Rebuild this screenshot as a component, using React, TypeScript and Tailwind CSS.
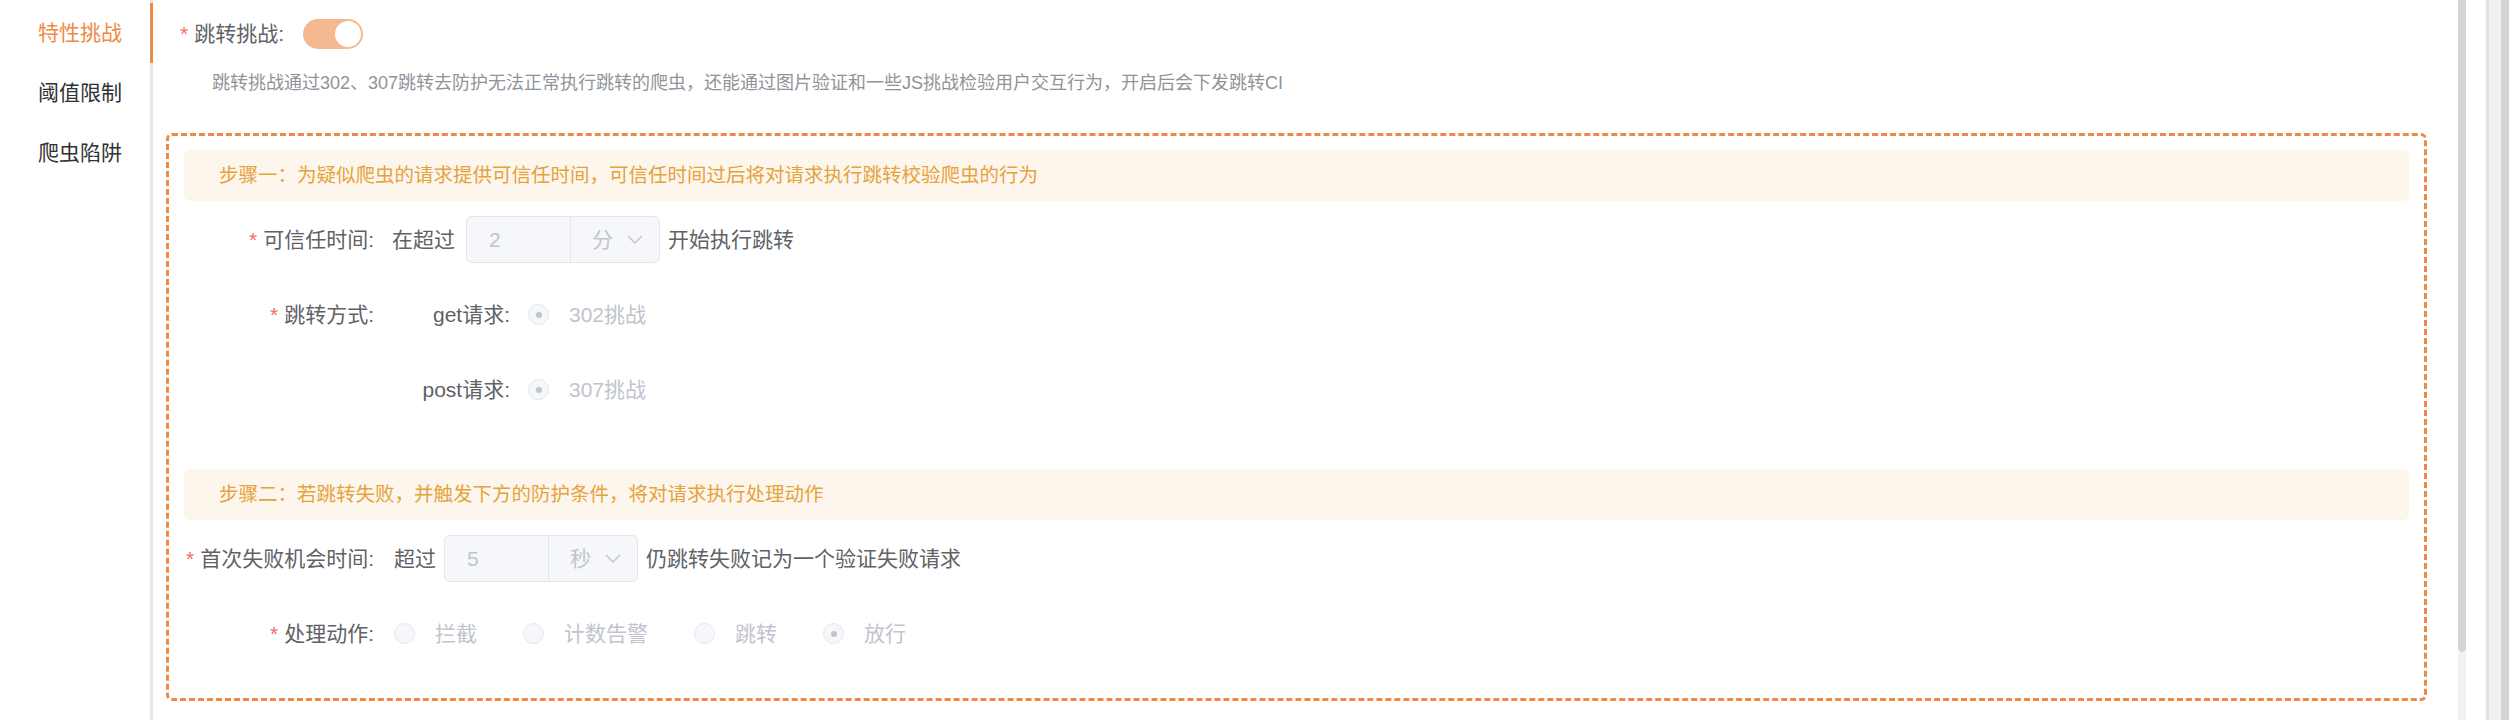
import React from "react";

const navItems = ["特性挑战", "阈值限制", "爬虫陷阱"];

function Req() {
  return <span className="mr-[6px] text-[#f56c6c]">*</span>;
}

function Radio({ checked, label }: { checked?: boolean; label: string }) {
  return (
    <span className="inline-flex items-center gap-[20px]">
      <span className="flex h-[21px] w-[21px] items-center justify-center rounded-full border-[1.5px] border-[#e4e7ed] bg-[#f5f7fa]">
        {checked && <span className="h-[6px] w-[6px] rounded-full bg-[#c0c4cc]" />}
      </span>
      <span className="text-[#c0c4cc]">{label}</span>
    </span>
  );
}

function UnitInput({ value, unit }: { value: string; unit: string }) {
  return (
    <div className="flex h-[47px] items-stretch rounded-[6px] border border-[#e2e5eb] bg-[#f5f7fa] text-[#c0c4cc]">
      <div className="flex w-[103px] items-center pl-[22px]">{value}</div>
      <div className="flex items-center border-l border-[#e2e5eb] pl-[21px] pr-[16px]">
        <span>{unit}</span>
        <svg className="ml-[14px]" width="16" height="10" viewBox="0 0 16 10" fill="none">
          <polyline points="1,1 8,8 15,1" stroke="#c0c4cc" strokeWidth="1.4" />
        </svg>
      </div>
    </div>
  );
}

function Label({ children }: { children: React.ReactNode }) {
  return (
    <div className="flex h-[47px] w-[208px] shrink-0 items-center justify-end pr-[18px]">
      {children}
    </div>
  );
}

export default function App() {
  return (
    <div className="flex h-[720px] w-[2509px] overflow-hidden bg-white text-[21px] [font-family:'Liberation_Sans','Noto_Sans_CJK_SC',sans-serif]">
      {/* side tabs */}
      <nav className="w-[153px] shrink-0 border-r-[3px] border-[#e4e7ed] pt-[3px]">
        {navItems.map((item, i) => (
          <div
            key={item}
            className={
              i === 0
                ? "relative flex h-[60px] items-center justify-end pr-[28px] text-[#ef8a43]"
                : "relative flex h-[60px] items-center justify-end pr-[28px] text-[#303133]"
            }
          >
            {item}
            {i === 0 && <span className="absolute right-[-3px] top-0 h-full w-[3px] bg-[#ef8a43]" />}
          </div>
        ))}
      </nav>

      {/* main pane */}
      <main className="w-[2305px] shrink-0 pl-[13px] pr-[31px] text-[#606266]">
        <div className="flex h-[60px] items-center pl-[14px] pt-[7px]">
          <Req />
          <span>跳转挑战:</span>
          <div className="ml-[19px] flex h-[30px] w-[60px] items-center justify-end rounded-full bg-[#f4b990] px-[2px]">
            <span className="h-[26px] w-[26px] rounded-full bg-white" />
          </div>
        </div>
        <p className="mt-[10px] pl-[46px] text-[18px] leading-[27px] text-[#909399]">
          跳转挑战通过302、307跳转去防护无法正常执行跳转的爬虫，还能通过图片验证和一些JS挑战检验用户交互行为，开启后会下发跳转CI
        </p>

        <section className="mt-[36px] h-[568px] rounded-[6px] border-[3px] border-dashed border-[#ee8a45] px-[15px] pt-[14px]">
          <div className="flex h-[51px] items-center rounded-[6px] bg-[#fdf6ec] pl-[35px] text-[19.5px] text-[#e6a23c]">
            步骤一：为疑似爬虫的请求提供可信任时间，可信任时间过后将对请求执行跳转校验爬虫的行为
          </div>

          <div className="mt-[15px] flex items-center">
            <Label>
              <Req />
              可信任时间:
            </Label>
            <span>在超过</span>
            <div className="ml-[11px] mr-[8px]">
              <UnitInput value="2" unit="分" />
            </div>
            <span>开始执行跳转</span>
          </div>

          <div className="mt-[28px] flex">
            <Label>
              <Req />
              跳转方式:
            </Label>
            <div className="flex flex-col gap-[28px]">
              <div className="flex h-[47px] items-center">
                <span className="w-[136px] pr-[18px] text-right">get请求:</span>
                <Radio checked label="302挑战" />
              </div>
              <div className="flex h-[47px] items-center">
                <span className="w-[136px] pr-[18px] text-right">post请求:</span>
                <Radio checked label="307挑战" />
              </div>
            </div>
          </div>

          <div className="mt-[56px] flex h-[51px] items-center rounded-[6px] bg-[#fdf6ec] pl-[35px] text-[19.5px] text-[#e6a23c]">
            步骤二：若跳转失败，并触发下方的防护条件，将对请求执行处理动作
          </div>

          <div className="mt-[15px] flex items-center">
            <Label>
              <Req />
              首次失败机会时间:
            </Label>
            <span className="ml-[2px]">超过</span>
            <div className="ml-[8px] mr-[8px]">
              <UnitInput value="5" unit="秒" />
            </div>
            <span>仍跳转失败记为一个验证失败请求</span>
          </div>

          <div className="mt-[28px] flex items-center">
            <Label>
              <Req />
              处理动作:
            </Label>
            <div className="ml-[2px] flex items-center gap-[46px]">
              <Radio label="拦截" />
              <Radio label="计数告警" />
              <Radio label="跳转" />
              <Radio checked label="放行" />
            </div>
          </div>
        </section>
      </main>

      {/* inner scrollbar */}
      <div className="flex w-[8px] shrink-0 flex-col">
        <div className="h-[652px] rounded-b-[4px] bg-[#d4d5d8]" />
        <div className="flex-1 bg-[#f1f1f1]" />
      </div>
      <div className="w-[20px] shrink-0" />
      {/* outer scrollbar */}
      <div className="flex w-[23px] shrink-0">
        <div className="w-[3px] bg-[#e3e3e3]" />
        <div className="w-[12px] bg-[#f0f0f0]" />
        <div className="w-[8px] bg-[#d4d4d7]" />
      </div>
    </div>
  );
}
